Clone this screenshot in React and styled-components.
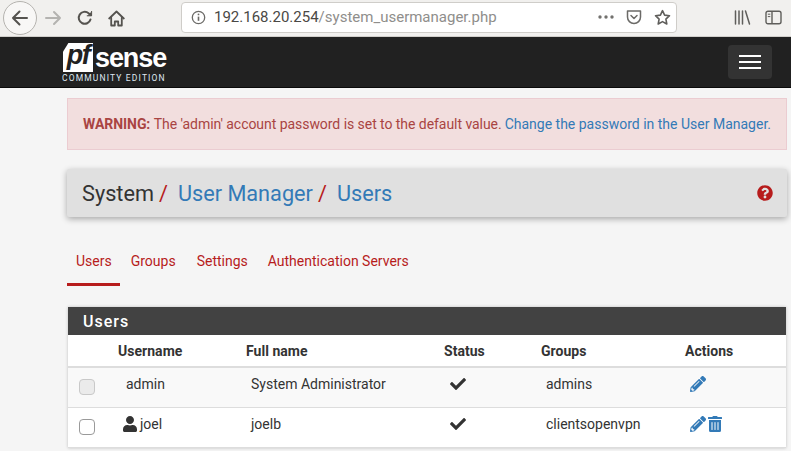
import React from "react";
import styled, { createGlobalStyle } from "styled-components";
import { FaCheck, FaPencilAlt, FaQuestionCircle, FaTrashAlt, FaUser } from "react-icons/fa";

const GlobalStyle = createGlobalStyle`
  html, body {
    margin: 0;
    height: 451px;
    overflow: hidden;
    background: #f5f5f5;
    font-family: Roboto, "Liberation Sans", sans-serif;
    font-size: 14px;
    color: #333;
  }
  * { box-sizing: border-box; }
`;

const BrowserBar = styled.div`
  height: 37px;
  background: #f1f0ee;
  border-bottom: 1px solid #d1cfcb;
  display: flex;
  align-items: center;
`;

const BackButton = styled.div`
  width: 34px;
  height: 34px;
  margin-left: 3px;
  border-radius: 50%;
  border: 1px solid #b5b3af;
  background: #f8f7f6;
  display: flex;
  align-items: center;
  justify-content: center;
  flex: none;
`;

const NavIcon = styled.div`
  width: 20px;
  height: 20px;
  margin-left: ${(p) => p.$gap}px;
  flex: none;
  display: flex;
  align-items: center;
  justify-content: center;
`;

const UrlBar = styled.div`
  width: 496px;
  height: 31px;
  margin-left: 55px;
  margin-top: -2px;
  flex: none;
  background: #fff;
  border: 1px solid #cfcdc9;
  border-radius: 4px;
  display: flex;
  align-items: center;
  padding: 0 5px 0 9px;
`;

const UrlText = styled.div`
  margin-left: 8px;
  font-family: Roboto, sans-serif;
  font-size: 15px;
  color: #4a4845;
  flex: 1;
  white-space: nowrap;
`;

const UrlPath = styled.span`
  color: #8f8e8b;
`;

const UrlActions = styled.div`
  display: flex;
  align-items: center;
  gap: 12px;
`;

const TopNav = styled.div`
  height: 51px;
  background: #212121;
  border-bottom: 1px solid #0b0b0b;
  display: flex;
  align-items: flex-start;
  justify-content: space-between;
  padding: 6px 19px 0 62px;
`;

const Logo = styled.div`
  display: flex;
  flex-direction: column;
  width: 106px;
`;

const LogoTop = styled.div`
  display: flex;
  align-items: center;
  height: 29px;
  padding-left: 1px;
`;

const LogoBox = styled.div`
  width: 30px;
  height: 29px;
  background: #fff;
  clip-path: polygon(18% 0, 100% 0, 100% 100%, 0 100%, 0 30%);
  color: #212121;
  font: italic 700 27px/25px "Liberation Sans", sans-serif;
  letter-spacing: -1.5px;
  text-align: center;
`;

const LogoWord = styled.div`
  color: #fff;
  font: 700 27px/29px "Liberation Sans", sans-serif;
  letter-spacing: -1.1px;
  margin-left: 2px;
  padding-top: 2px;
`;

const LogoEdition = styled.div`
  margin-top: 1px;
  color: #dfe8f2;
  font: 400 8.5px/11px Roboto, sans-serif;
  letter-spacing: 1.15px;
  white-space: nowrap;
`;

const MenuButton = styled.div`
  width: 44px;
  height: 34px;
  margin-top: 2px;
  border-radius: 4px;
  background: #333;
  display: flex;
  flex-direction: column;
  justify-content: center;
  align-items: center;
  gap: 4px;
`;

const MenuBar = styled.span`
  display: block;
  width: 22px;
  height: 2px;
  background: #fff;
`;

const Content = styled.div`
  padding: 10px 4px 0 67px;
`;

const Alert = styled.div`
  height: 52px;
  background: #f2dede;
  border: 1px solid #ebccd1;
  color: #a94442;
  padding: 0 15px;
  display: flex;
  align-items: center;
  white-space: nowrap;
  font-size: 14px;
  letter-spacing: -0.05px;
`;

const AlertLink = styled.a`
  color: #337ab7;
  margin-left: 3px;
  letter-spacing: 0;
`;

const Breadcrumb = styled.div`
  margin-top: 19px;
  height: 48px;
  background: #e0e0e0;
  border-radius: 2px;
  box-shadow: 0 2px 6px rgba(0, 0, 0, 0.32);
  display: flex;
  align-items: center;
  padding: 0 14px 0 15px;
  font-size: 21.7px;
  white-space: nowrap;
`;

const Crumb = styled.span`
  color: ${(p) => (p.$link ? "#337ab7" : "#333")};
`;

const Slash = styled.span`
  color: #b71c1c;
  margin: 0 10px 0 5px;
`;

const HelpIcon = styled.div`
  margin-left: auto;
  color: #b71c1c;
  display: flex;
  font-size: 16px;
`;

const Tabs = styled.div`
  display: flex;
  margin-top: 25px;
  height: 44px;
`;

const Tab = styled.a`
  color: #b71c1c;
  padding: 9px ${(p) => (p.$active ? 8 : 9)}px 0 9px;
  line-height: 20px;
  margin-right: ${(p) => p.$gap || 0}px;
  border-bottom: ${(p) => (p.$active ? "3px solid #b71c1c" : "none")};
`;

const Panel = styled.div`
  margin: 21px 1px 0;
  background: #fff;
  box-shadow: 0 0 3px rgba(0, 0, 0, 0.22);
`;

const PanelHeading = styled.div`
  height: 28px;
  background: #424242;
  color: #fff;
  font-weight: 500;
  font-size: 16px;
  letter-spacing: 1px;
  line-height: 29px;
  padding-left: 15px;
`;

const Table = styled.table`
  width: 100%;
  border-collapse: collapse;
  table-layout: fixed;
`;

const Th = styled.th`
  height: 32px;
  width: ${(p) => p.$width}px;
  text-align: left;
  font-weight: 700;
  font-size: 14px;
  letter-spacing: 0.03px;
  padding: 0;
  border-bottom: 2px solid #ddd;
`;

const Row = styled.tr`
  background: ${(p) => (p.$odd ? "#f9f9f9" : "#fff")};
  border-bottom: 1px solid #ddd;
`;

const Td = styled.td`
  height: 40px;
  padding: 0 0 6px ${(p) => p.$pad || 5}px;
  white-space: nowrap;
  vertical-align: middle;
`;

const CheckCell = styled.td`
  padding: 0 0 0 11px;
  vertical-align: middle;
`;

const CheckBox = styled.span`
  display: block;
  width: 16px;
  height: 16px;
  border-radius: 4px;
  border: 1px solid ${(p) => (p.$disabled ? "#c9c9c9" : "#9a9a9a")};
  background: ${(p) => (p.$disabled ? "#ebebeb" : "#fff")};
`;

const UserName = styled.span`
  display: flex;
  align-items: center;
  gap: 2px;
`;

const ActionIcons = styled.span`
  display: flex;
  align-items: center;
  gap: 1px;
  color: #337ab7;
  font-size: 16px;
`;

const StatusIcon = styled.span`
  display: flex;
  color: #333;
  font-size: 16px;
`;

const ArrowLeft = () => (
  <svg width="20" height="20" viewBox="0 0 20 20" fill="none" stroke="#55534f" strokeWidth="2" strokeLinecap="round" strokeLinejoin="round">
    <path d="M17 10H3M9.5 3.5L3 10l6.5 6.5" />
  </svg>
);

const ArrowRight = () => (
  <svg width="18" height="18" viewBox="0 0 18 18" fill="none" stroke="#b4b3b0" strokeWidth="2" strokeLinecap="round" strokeLinejoin="round">
    <path d="M2 9h14M10 3l6 6-6 6" />
  </svg>
);

const Reload = () => (
  <svg width="16" height="16" viewBox="0 0 16 16" fill="none" stroke="#55534f" strokeWidth="2" strokeLinecap="round" strokeLinejoin="round">
    <path d="M13.5 9.5A6 6 0 1 1 11.6 3.2L14 5" />
    <path d="M14.6 1.4v4.4h-4.4" fill="#55534f" strokeWidth="1" />
  </svg>
);

const Home = () => (
  <svg width="17" height="17" viewBox="0 0 17 17" fill="none" stroke="#55534f" strokeWidth="1.8" strokeLinejoin="round" strokeLinecap="round">
    <path d="M1.2 8.5L8.5 1.5l7.3 7" />
    <path d="M3.2 7.5v8h3.6v-4h3.4v4h3.6v-8" />
  </svg>
);

const Info = () => (
  <svg width="15" height="15" viewBox="0 0 15 15" fill="none" stroke="#6b6a67" strokeWidth="1.3">
    <circle cx="7.5" cy="7.5" r="6.2" />
    <path d="M7.5 6.6v4.2" strokeWidth="1.6" />
    <circle cx="7.5" cy="4.4" r="0.9" fill="#6b6a67" stroke="none" />
  </svg>
);

const Dots = () => (
  <svg width="16" height="4" viewBox="0 0 16 4" fill="#72716e">
    <circle cx="2" cy="2" r="1.7" />
    <circle cx="8" cy="2" r="1.7" />
    <circle cx="14" cy="2" r="1.7" />
  </svg>
);

const Pocket = () => (
  <svg width="16" height="15" viewBox="0 0 16 15" fill="none" stroke="#6b6a67" strokeWidth="1.5" strokeLinecap="round" strokeLinejoin="round">
    <path d="M1.5 1h13v6a6.5 6.5 0 0 1-13 0z" />
    <path d="M5 5.5l3 3 3-3" />
  </svg>
);

const Star = () => (
  <svg width="17" height="17" viewBox="0 0 17 17" fill="none" stroke="#5f5e5b" strokeWidth="1.6" strokeLinejoin="round">
    <path d="M8.5 1.6l2.1 4.5 4.9.6-3.6 3.4.9 4.9-4.3-2.4-4.3 2.4.9-4.9-3.6-3.4 4.9-.6z" />
  </svg>
);

const Library = () => (
  <svg width="17" height="15" viewBox="0 0 17 15" fill="none" stroke="#5f5e5b" strokeWidth="1.5" strokeLinecap="round">
    <path d="M1.5 1v13M5 1v13M8.5 1v13M11.5 1l4 13" />
  </svg>
);

const Sidebar = () => (
  <svg width="17" height="15" viewBox="0 0 17 15" fill="none" stroke="#5f5e5b" strokeWidth="1.4">
    <rect x="1" y="1.2" width="15" height="12.6" rx="2" />
    <path d="M7 1.2v12.6" />
    <path d="M2.8 4.2h2.5M2.8 6.6h2.5" strokeWidth="1" />
  </svg>
);

const RightIcons = styled.div`
  display: flex;
  align-items: center;
  gap: 14px;
  margin-left: 57px;
  margin-top: -2px;
`;

const users = [
  { name: "admin", full: "System Administrator", group: "admins", odd: true, builtin: true },
  { name: "joel", full: "joelb", group: "clientsopenvpn" },
];

export default function App() {
  return (
    <>
      <GlobalStyle />
      <BrowserBar>
        <BackButton>
          <ArrowLeft />
        </BackButton>
        <NavIcon $gap={6}>
          <ArrowRight />
        </NavIcon>
        <NavIcon $gap={12}>
          <Reload />
        </NavIcon>
        <NavIcon $gap={11}>
          <Home />
        </NavIcon>
        <UrlBar>
          <Info />
          <UrlText>
            192.168.20.254<UrlPath>/system_usermanager.php</UrlPath>
          </UrlText>
          <UrlActions>
            <Dots />
            <Pocket />
            <Star />
          </UrlActions>
        </UrlBar>
        <RightIcons>
          <Library />
          <Sidebar />
        </RightIcons>
      </BrowserBar>

      <TopNav>
        <Logo>
          <LogoTop>
            <LogoBox>pf</LogoBox>
            <LogoWord>sense</LogoWord>
          </LogoTop>
          <LogoEdition>COMMUNITY EDITION</LogoEdition>
        </Logo>
        <MenuButton>
          <MenuBar />
          <MenuBar />
          <MenuBar />
        </MenuButton>
      </TopNav>

      <Content>
        <Alert>
          <strong>WARNING:</strong>&nbsp;The 'admin' account password is set to the default value.
          <AlertLink>Change the password in the User Manager.</AlertLink>
        </Alert>

        <Breadcrumb>
          <Crumb>System</Crumb>
          <Slash>/</Slash>
          <Crumb $link>User Manager</Crumb>
          <Slash>/</Slash>
          <Crumb $link>Users</Crumb>
          <HelpIcon>
            <FaQuestionCircle />
          </HelpIcon>
        </Breadcrumb>

        <Tabs>
          <Tab $active $gap={2}>Users</Tab>
          <Tab $gap={3}>Groups</Tab>
          <Tab $gap={2}>Settings</Tab>
          <Tab>Authentication Servers</Tab>
        </Tabs>

        <Panel>
          <PanelHeading>Users</PanelHeading>
          <Table>
            <thead>
              <tr>
                <Th $width={50} />
                <Th $width={128}>Username</Th>
                <Th $width={198}>Full name</Th>
                <Th $width={97}>Status</Th>
                <Th $width={144}>Groups</Th>
                <Th>Actions</Th>
              </tr>
            </thead>
            <tbody>
              {users.map((user) => (
                <Row key={user.name} $odd={user.odd}>
                  <CheckCell>
                    <CheckBox $disabled={user.builtin} />
                  </CheckCell>
                  <Td $pad={user.builtin ? 8 : 4}>
                    <UserName>
                      {!user.builtin && <FaUser size={16} />}
                      {user.name}
                    </UserName>
                  </Td>
                  <Td>{user.full}</Td>
                  <Td $pad={6}>
                    <StatusIcon>
                      <FaCheck />
                    </StatusIcon>
                  </Td>
                  <Td>{user.group}</Td>
                  <Td>
                    <ActionIcons>
                      <FaPencilAlt />
                      {!user.builtin && <FaTrashAlt />}
                    </ActionIcons>
                  </Td>
                </Row>
              ))}
            </tbody>
          </Table>
        </Panel>
      </Content>
    </>
  );
}
